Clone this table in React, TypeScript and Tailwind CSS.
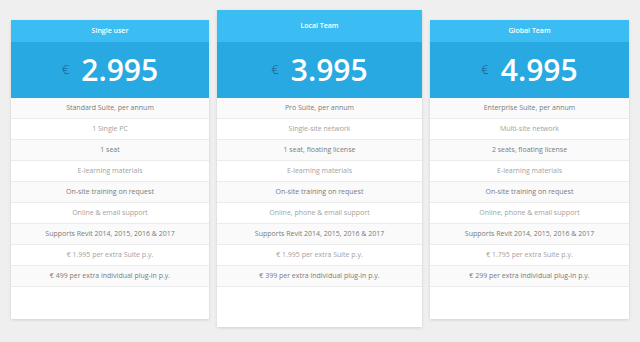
const plans = [
  {
    name: 'Single user',
    price: '2.995',
    featured: false,
    rows: [
      'Standard Suite, per annum',
      '1 Single PC',
      '1 seat',
      'E-learning materials',
      'On-site training on request',
      'Online & email support',
      'Supports Revit 2014, 2015, 2016 & 2017',
      '€ 1.995 per extra Suite p.y.',
      '€ 499 per extra individual plug-in p.y.',
    ],
  },
  {
    name: 'Local Team',
    price: '3.995',
    featured: true,
    rows: [
      'Pro Suite, per annum',
      'Single-site network',
      '1 seat, floating license',
      'E-learning materials',
      'On-site training on request',
      'Online, phone & email support',
      'Supports Revit 2014, 2015, 2016 & 2017',
      '€ 1.995 per extra Suite p.y.',
      '€ 399 per extra individual plug-in p.y.',
    ],
  },
  {
    name: 'Global Team',
    price: '4.995',
    featured: false,
    rows: [
      'Enterprise Suite, per annum',
      'Multi-site network',
      '2 seats, floating license',
      'E-learning materials',
      'On-site training on request',
      'Online, phone & email support',
      'Supports Revit 2014, 2015, 2016 & 2017',
      '€ 1.795 per extra Suite p.y.',
      '€ 299 per extra individual plug-in p.y.',
    ],
  },
];

type Plan = (typeof plans)[number];

function PriceCard({ plan, className }: { plan: Plan; className: string }) {
  return (
    <div className={`bg-white shadow-[0_1px_3px_rgba(0,0,0,0.13)] ${className}`}>
      {/* plan name */}
      <div
        className={`flex items-center justify-center bg-[#3bbcf3] text-[7px] font-semibold text-white ${
          plan.featured ? 'h-[32px]' : 'h-[22px]'
        }`}
      >
        {plan.name}
      </div>

      {/* price */}
      <div className="flex h-[56px] items-center justify-center gap-[12px] bg-[#29a9e1]">
        <span className="mb-[2px] text-[13px] font-light leading-none text-[#1d5b82]">€</span>
        <span className="text-[30px] font-semibold leading-none text-white">{plan.price}</span>
      </div>

      {/* features */}
      <ul className={plan.featured ? 'pb-[40px]' : 'pb-[32px]'}>
        {plan.rows.map((row, i) => (
          <li
            key={row}
            className={`flex h-[21px] items-center justify-center border-b border-[#ebebeb] text-[7px] ${
              i % 2 === 0 ? 'bg-[#fafafa] text-[#7a7a7a]' : 'bg-white text-[#a2a2a2]'
            }`}
          >
            {row}
          </li>
        ))}
      </ul>
    </div>
  );
}

export default function App() {
  return (
    <div
      className="flex min-h-screen items-start gap-[8px] bg-[#efefef] px-[11px] pt-[10px]"
      style={{ fontFamily: '"Open Sans", "Noto Sans", sans-serif' }}
    >
      <PriceCard plan={plans[0]} className="mt-[10px] w-[198px]" />
      <PriceCard plan={plans[1]} className="w-[205px]" />
      <PriceCard plan={plans[2]} className="mt-[10px] w-[199px]" />
    </div>
  );
}
